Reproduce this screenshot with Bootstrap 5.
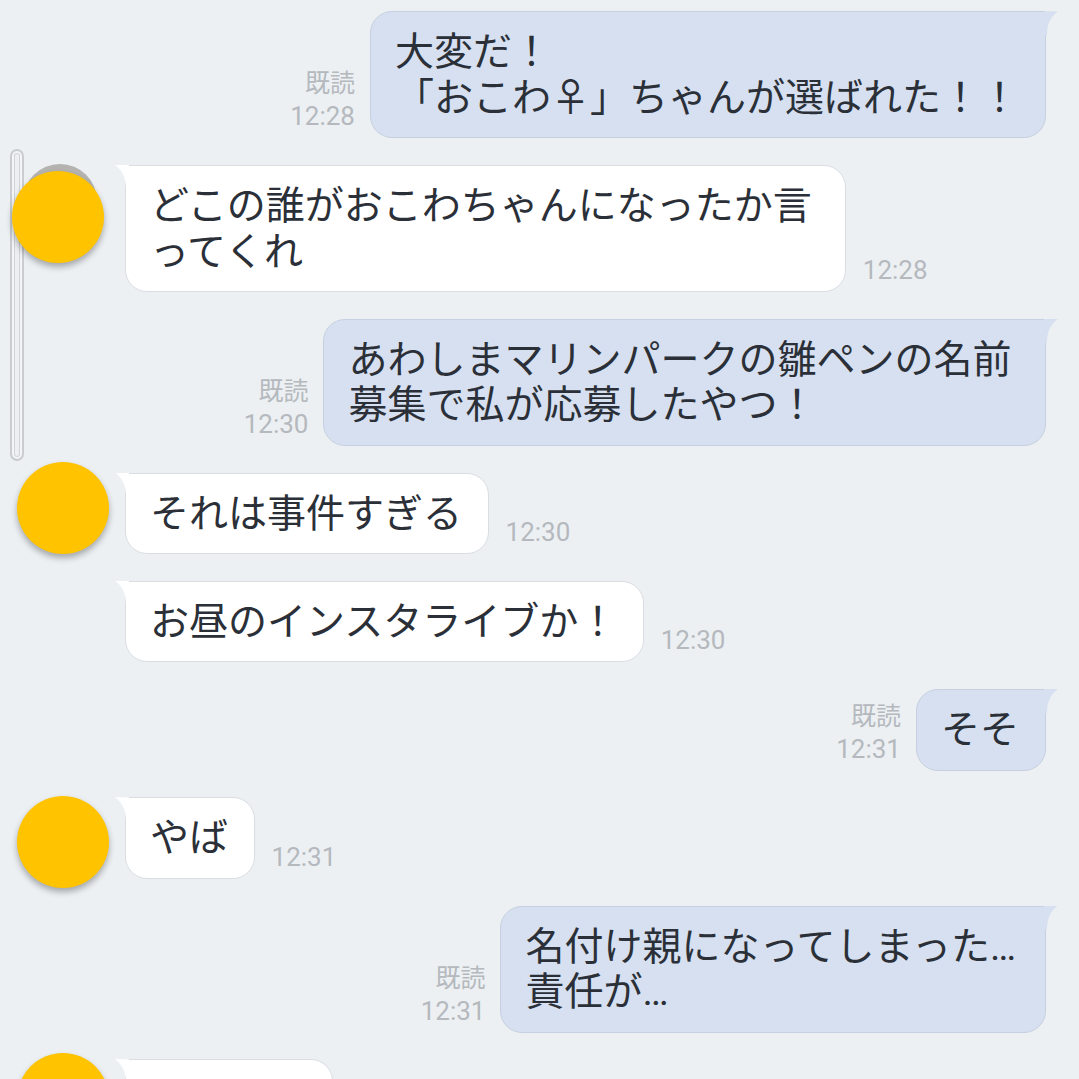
<!DOCTYPE html>
<html lang="ja">

<head>
    <meta charset="UTF-8">
    <meta name="viewport" content="width=device-width, initial-scale=1.0">
    <title>Chat</title>
    <link href="https://cdn.jsdelivr.net/npm/bootstrap@5.3.0/dist/css/bootstrap.min.css" rel="stylesheet">
    <script defer src="https://cdn.jsdelivr.net/npm/bootstrap@5.3.0/dist/js/bootstrap.bundle.min.js"></script>
    <style>
        html, body {
            height: 1079px;
            overflow: hidden;
        }

        body {
            background-color: #ecf0f3;
            font-family: Roboto, "Noto Sans CJK JP", sans-serif;
            color: #2b3038;
        }

        .talk {
            height: 1079px;
            overflow: hidden;
            padding-top: 11.3px;
            gap: 26.75px;
        }

        .msg-row {
            flex: none;
            position: relative;
        }

        .msg-in { padding-left: 125px; }
        .msg-out { padding-right: 33px; }

        .bubble {
            position: relative;
            font-size: 39px;
            line-height: 45.5px;
            padding: 18px 26px 16px 24px;
            border: 1px solid;
            border-radius: 22px;
            white-space: nowrap;
        }

        .bubble::before {
            content: "";
            position: absolute;
            top: -1px;
            width: 14px;
            height: 24px;
        }

        .bubble-in {
            background-color: #fff;
            border-color: #dadee3;
            border-top-left-radius: 0;
        }

        .bubble-in::before {
            left: -11px;
            background-color: #fff;
            clip-path: path('M0 0H14V24H11C11 12 7 5 0 0Z');
        }

        .bubble-out {
            background-color: #d6e0f0;
            border-color: #c6d0e0;
            border-top-right-radius: 0;
        }

        .bubble-out::before {
            right: -13px;
            background-color: #d6e0f0;
            clip-path: path('M0 0H14C7 5 3 12 3 24H0Z');
        }

        .wrapped { padding-right: 33.5px; }
        .dots-line { padding-right: 29px; }

        .meta {
            font-size: 26px;
            line-height: 33px;
            color: #b5b9be;
            text-align: right;
            padding-bottom: 5px;
        }

        .meta-out { margin-right: 15px; }
        .meta-in { margin-left: 16.5px; }
        .meta .seen { font-size: 25px; }

        .avatar {
            position: absolute;
            left: 17px;
            width: 92px;
            height: 92px;
            border-radius: 50%;
            background-color: #ffc300;
            box-shadow: 0 4px 6px rgba(0, 0, 0, .3);
        }

        .avatar-a { top: -11px; }
        .avatar-b { top: -1px; }
        .avatar-c { top: -6px; }

        .avatar-stuck {
            left: 12px;
            top: 6px;
            z-index: 2;
        }

        .avatar-ghost {
            position: absolute;
            left: 23px;
            top: -1px;
            width: 74px;
            height: 74px;
            border-radius: 50%;
            background-color: #b5b3b0;
        }

        .scroll-thumb {
            position: absolute;
            left: 10px;
            top: 149px;
            width: 14px;
            height: 312px;
            border: 2px solid #c9cdd2;
            border-radius: 7px;
            box-shadow: inset 0 0 0 2px #f3f5f7, inset 0 0 0 3px #d0d3d8;
        }

        .empty-line { height: 45.5px; width: 156px; }
    </style>
</head>

<body>
    <div class="talk d-flex flex-column position-relative">
        <div class="scroll-thumb"></div>

        <div class="msg-row msg-out d-flex justify-content-end align-items-end">
            <div class="meta meta-out"><div class="seen">既読</div><div>12:28</div></div>
            <div class="bubble bubble-out">大変だ！<br>「おこわ♀」ちゃんが選ばれた！！</div>
        </div>

        <div class="msg-row msg-in d-flex align-items-end">
            <div class="avatar-ghost"></div>
            <div class="avatar avatar-stuck"></div>
            <div class="bubble bubble-in wrapped">どこの誰がおこわちゃんになったか言<br>ってくれ</div>
            <div class="meta meta-in">12:28</div>
        </div>

        <div class="msg-row msg-out d-flex justify-content-end align-items-end">
            <div class="meta meta-out"><div class="seen">既読</div><div>12:30</div></div>
            <div class="bubble bubble-out wrapped">あわしまマリンパークの雛ペンの名前<br>募集で私が応募したやつ！</div>
        </div>

        <div class="msg-row msg-in d-flex align-items-end">
            <div class="avatar avatar-a"></div>
            <div class="bubble bubble-in">それは事件すぎる</div>
            <div class="meta meta-in">12:30</div>
        </div>

        <div class="msg-row msg-in d-flex align-items-end">
            <div class="bubble bubble-in">お昼のインスタライブか！</div>
            <div class="meta meta-in">12:30</div>
        </div>

        <div class="msg-row msg-out d-flex justify-content-end align-items-end">
            <div class="meta meta-out"><div class="seen">既読</div><div>12:31</div></div>
            <div class="bubble bubble-out">そそ</div>
        </div>

        <div class="msg-row msg-in d-flex align-items-end">
            <div class="avatar avatar-b"></div>
            <div class="bubble bubble-in">やば</div>
            <div class="meta meta-in">12:31</div>
        </div>

        <div class="msg-row msg-out d-flex justify-content-end align-items-end">
            <div class="meta meta-out"><div class="seen">既読</div><div>12:31</div></div>
            <div class="bubble bubble-out dots-line">名付け親になってしまった…<br>責任が…</div>
        </div>

        <div class="msg-row msg-in d-flex align-items-end">
            <div class="avatar avatar-c"></div>
            <div class="bubble bubble-in"><div class="empty-line"></div></div>
        </div>
    </div>
</body>

</html>
